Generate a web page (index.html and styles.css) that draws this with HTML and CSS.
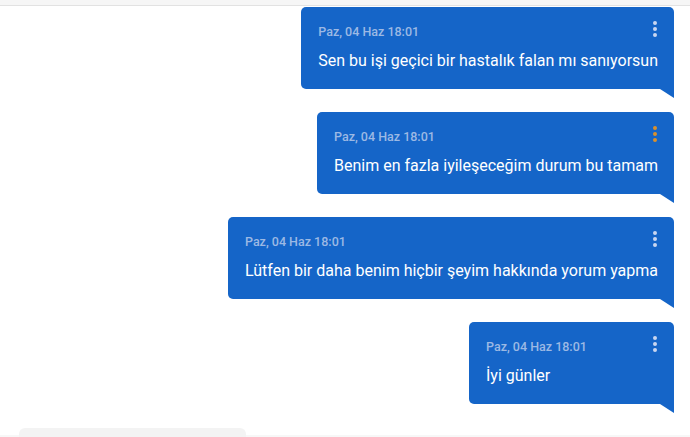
FILE: index.html
```html
<!DOCTYPE html>
<html lang="tr">
<head>
<meta charset="utf-8">
<link rel="stylesheet" href="styles.css">
</head>
<body>
<div class="topbar"></div>
<main class="thread">
  <div class="msg">
    <div class="meta">Paz, 04 Haz 18:01</div>
    <div class="text">Sen bu işi geçici bir hastalık falan mı sanıyorsun</div>
    <span class="dots"><i></i><i></i><i></i></span>
  </div>
  <div class="msg">
    <div class="meta">Paz, 04 Haz 18:01</div>
    <div class="text">Benim en fazla iyileşeceğim durum bu tamam</div>
    <span class="dots hot"><i></i><i></i><i></i></span>
  </div>
  <div class="msg">
    <div class="meta">Paz, 04 Haz 18:01</div>
    <div class="text">Lütfen bir daha benim hiçbir şeyim hakkında yorum yapma</div>
    <span class="dots"><i></i><i></i><i></i></span>
  </div>
  <div class="msg">
    <div class="meta">Paz, 04 Haz 18:01</div>
    <div class="text">İyi günler</div>
    <span class="dots"><i></i><i></i><i></i></span>
  </div>
</main>
<footer class="composer"><div class="input"></div></footer>
</body>
</html>
```
FILE: styles.css
```css
html, body {
  margin: 0;
  padding: 0;
  background: #ffffff;
  height: 437px;
  overflow: hidden;
}
body {
  font-family: Roboto, "Liberation Sans", sans-serif;
  display: flex;
  flex-direction: column;
}
.topbar {
  height: 5px;
  background: #f6f6f6;
  border-bottom: 1px solid #e2e2e2;
  flex: none;
}
.thread {
  flex: 1;
  display: flex;
  flex-direction: column;
  align-items: flex-end;
  gap: 23px;
  padding: 1px 16px 0 0;
}
.msg {
  position: relative;
  background: #1565c8;
  border-radius: 5px 5px 0 5px;
  padding: 17px 16px 18px 17px;
  display: flex;
  flex-direction: column;
  gap: 11px;
  min-width: 172px;
}
.msg::after {
  content: "";
  position: absolute;
  right: 0;
  bottom: -9px;
  border-top: 9px solid #1565c8;
  border-left: 14px solid transparent;
}
.meta {
  font-size: 12.5px;
  line-height: 16px;
  font-weight: 500;
  color: #9cb9e4;
}
.text {
  font-size: 16px;
  line-height: 20px;
  color: #ffffff;
  white-space: nowrap;
}
.dots {
  position: absolute;
  top: 14px;
  right: 17px;
  display: flex;
  flex-direction: column;
  gap: 2px;
}
.dots i {
  width: 4px;
  height: 4px;
  border-radius: 50%;
  background: #c9d6f0;
}
.dots.hot i {
  background: #d9902c;
}
.composer {
  flex: none;
  height: 9px;
  padding: 0 0 0 19px;
  background: linear-gradient(#ffffff 0 7px, #f7f7f7 7px);
}
.input {
  width: 227px;
  height: 9px;
  background: #f3f3f3;
  border-radius: 6px 6px 0 0;
}
```
